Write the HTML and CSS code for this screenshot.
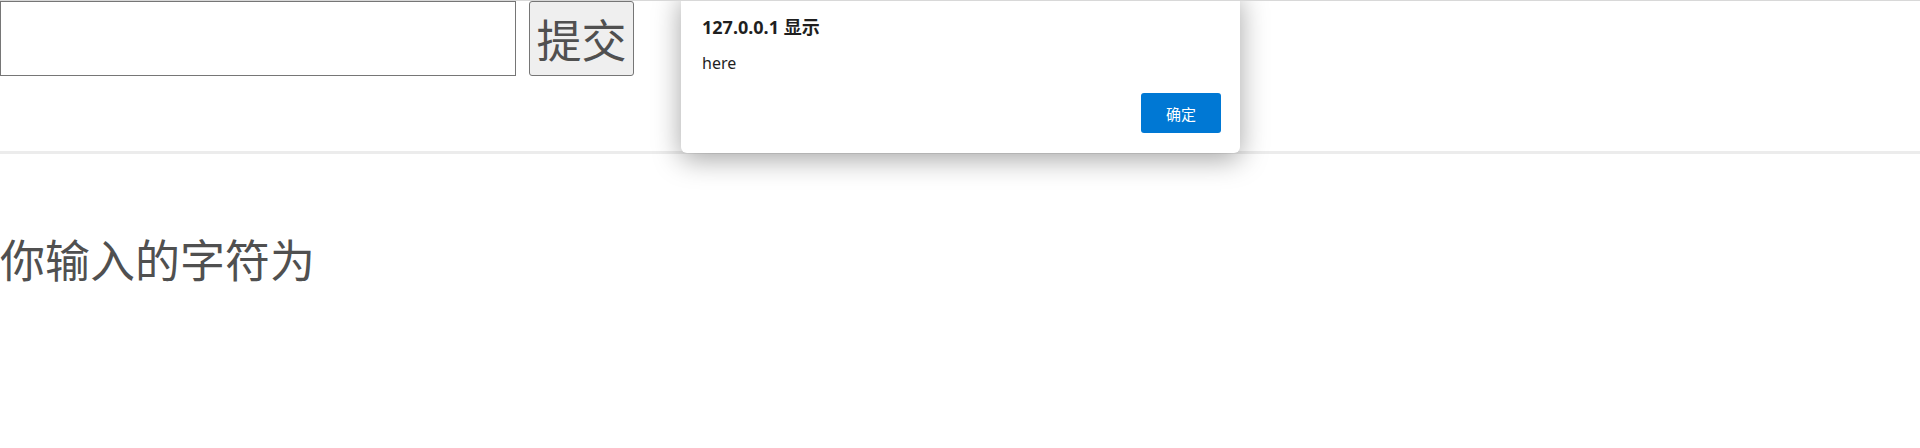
FILE: index.html
```html
<!DOCTYPE html>
<html lang="zh-CN">
<head>
<meta charset="utf-8">
<title>XSS</title>
<link rel="stylesheet" href="styles.css">
</head>
<body>
<div class="top">
  <form class="form">
    <input class="field" type="text">
    <button class="submit" type="button"><span class="submit-text">提交</span></button>
  </form>
</div>
<h2 class="result">你输入的字符为</h2>

<div class="dialog">
  <div class="dialog-title">127.0.0.1 显示</div>
  <div class="dialog-msg">here</div>
  <div class="dialog-actions">
    <button class="ok" type="button">确定</button>
  </div>
</div>
</body>
</html>
```
FILE: styles.css
```css
html, body {
  margin: 0;
  padding: 0;
  background: #ffffff;
}
body {
  font-family: "Noto Sans CJK SC", "Noto Sans", sans-serif;
  color: #505050;
  border-top: 1px solid #d8d8d8;
  position: relative;
  height: 447px;
  overflow: hidden;
}
.top {
  height: 150px;
  border-bottom: 3px solid #ececec;
}
.form {
  display: flex;
  gap: 13px;
  margin: 0;
}
.field {
  box-sizing: border-box;
  width: 516px;
  height: 75px;
  margin: 0;
  border: 1px solid #767676;
  border-radius: 0;
  background: #fff;
  padding: 0;
}
.submit {
  box-sizing: border-box;
  width: 105px;
  height: 75px;
  margin: 0;
  padding: 0;
  border: 1px solid #767676;
  border-radius: 3px;
  background: #efefef;
  color: #505050;
  font-family: "Noto Sans CJK SC", sans-serif;
  font-size: 45px;
  line-height: 45px;
  display: flex;
  align-items: center;
  justify-content: center;
}
.submit-text {
  display: block;
  line-height: 45px;
}
.result {
  margin: 82px 0 0 0;
  font-weight: normal;
  font-size: 45px;
  line-height: 45px;
  color: #505050;
  font-family: "Noto Sans CJK SC", sans-serif;
}
.dialog {
  position: absolute;
  left: 681px;
  top: -9px;
  width: 559px;
  box-sizing: border-box;
  padding: 23px 19px 20px 21px;
  background: #fff;
  border-radius: 6px;
  box-shadow: 0 6px 28px rgba(0, 0, 0, 0.36);
  font-family: "Noto Sans", "Noto Sans CJK SC", sans-serif;
  color: #1f1f1f;
}
.dialog-title {
  font-size: 18px;
  font-weight: bold;
  line-height: 24px;
  height: 24px;
}
.dialog-msg {
  margin-top: 14px;
  font-size: 16px;
  line-height: 20px;
}
.dialog-actions {
  display: flex;
  justify-content: flex-end;
  margin-top: 20px;
}
.ok {
  width: 80px;
  height: 40px;
  border: none;
  border-radius: 3px;
  background: #0078d4;
  color: #ffffff;
  font-family: "Noto Sans CJK SC", sans-serif;
  font-size: 15px;
  padding: 0;
}
```
